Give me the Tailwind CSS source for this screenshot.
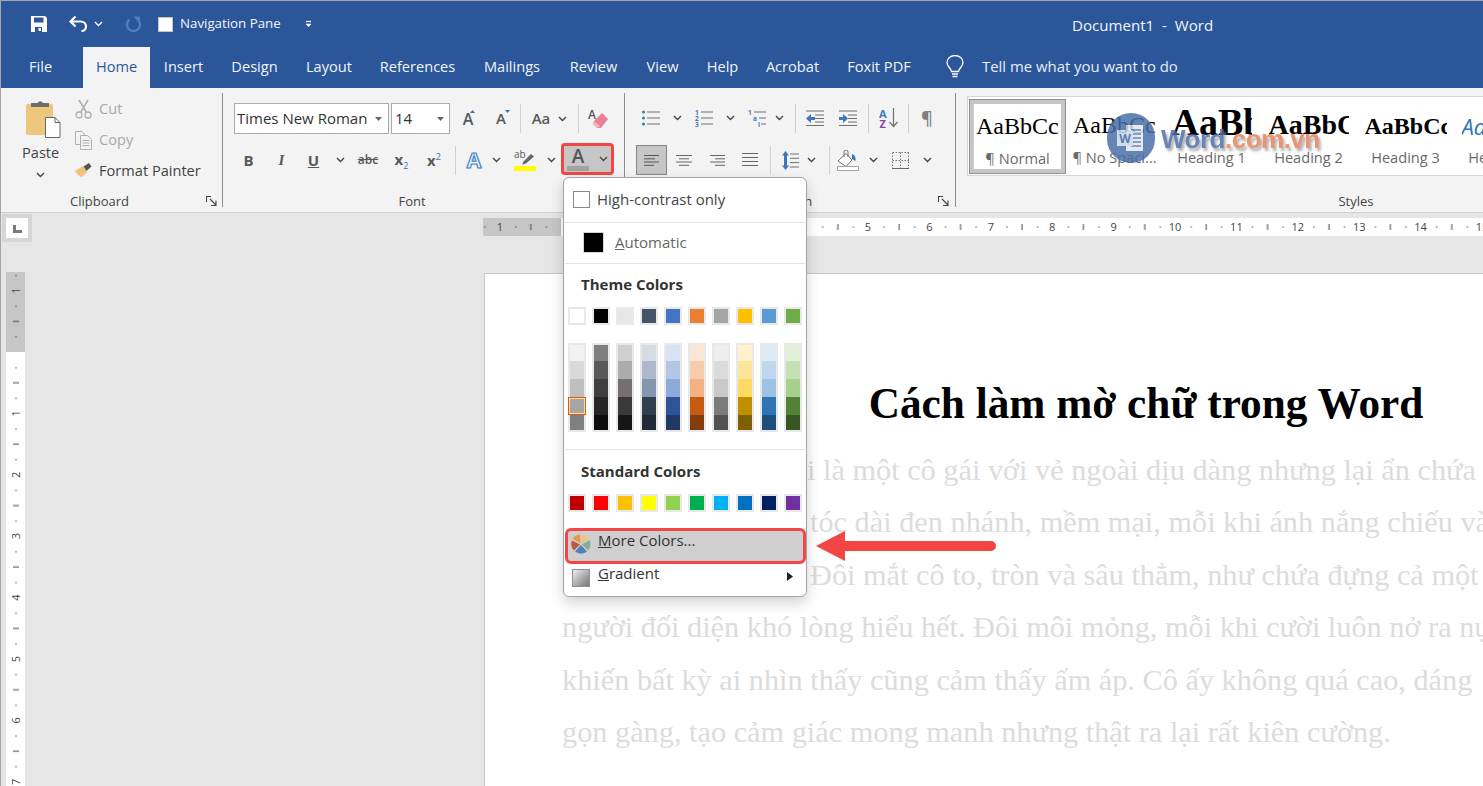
<!DOCTYPE html>
<html><head><meta charset="utf-8"><script src="https://cdn.jsdelivr.net/npm/@tailwindcss/browser@4"></script></head>
<body class="relative w-[1483px] h-[786px] overflow-hidden bg-[#e6e6e6] text-[#444] [font-family:'Open_Sans',sans-serif] text-[14.6px]">

<!-- Title bar -->
<div class="h-[47px] bg-[#2b579a] border-t border-[#a6a6a6] flex items-center text-white relative">
  <div class="w-[31px]"></div>
  <svg class="w-[16px] h-[16px]" viewBox="0 0 16 16"><path fill-rule="evenodd" fill="#fff" d="M0 0H14L16 2V16H0ZM3 1.5V6.5H12.5V1.5ZM4 11V16H11V11ZM7.5 12H10V15H7.5Z"/></svg>
  <div class="w-[22px]"></div>
  <svg class="w-[19px] h-[16px]" viewBox="0 0 19 16"><path d="M2 5.5H11.5C14.5 5.5 17 7.5 17 10.5C17 13 15 15 12.5 15" fill="none" stroke="#fff" stroke-width="2.2"/><path d="M6.5 .5L1.5 5.5L6.5 10.5" fill="none" stroke="#fff" stroke-width="2.2"/></svg>
  <svg class="w-[9px] h-[6px] ml-[6px]" viewBox="0 0 9 6"><path d="M1 1L4.5 4.5L8 1" fill="none" stroke="#fff" stroke-width="1.4"/></svg>
  <svg class="w-[17px] h-[17px] ml-[21px]" viewBox="0 0 17 17"><path d="M5.5 3.5A6.5 6.5 0 1 0 13.5 3.5" fill="none" stroke="#4f7fb8" stroke-width="2.4"/><path d="M9 .5H16V7.5Z" fill="#4f7fb8"/></svg>
  <div class="w-[15px] h-[15px] ml-[17px] bg-white border border-[#c4c4c4]"></div>
  <span class="ml-[7px] text-[13.3px] w-[110px] whitespace-nowrap text-[#f2f5fa]">Navigation Pane</span>
  <svg class="w-[7px] h-[8px] ml-[15px]" viewBox="0 0 7 8"><path d="M1 1.5H6" stroke="#fff" stroke-width="1.2"/><path d="M.5 3.8H6.500L3.5 7Z" fill="#fff"/></svg>
  <span class="absolute left-[1072px] top-[14px] leading-[20px] text-[15.1px] whitespace-pre text-[#f2f5fa]">Document1  -  Word</span>
</div>

<!-- Tabs -->
<div class="h-[41px] bg-[#2b579a] flex text-[#f0f3f8] text-[14.6px] leading-[39px]">
  <div class="w-[83px] pl-[29px]">File</div>
  <div class="w-[67px] text-center bg-[#f3f3f3] text-[#2b579a]">Home</div>
  <div class="w-[67px] text-center">Insert</div>
  <div class="w-[75px] text-center">Design</div>
  <div class="w-[74px] text-center">Layout</div>
  <div class="w-[103px] text-center">References</div>
  <div class="w-[86px] text-center">Mailings</div>
  <div class="w-[77px] text-center">Review</div>
  <div class="w-[61px] text-center">View</div>
  <div class="w-[59px] text-center">Help</div>
  <div class="w-[81px] text-center">Acrobat</div>
  <div class="w-[92px] text-center">Foxit PDF</div>
  <div class="w-[21px]"></div>
  <svg class="w-[18px] h-[24px] mt-[8px]" viewBox="0 0 18 24"><path d="M5.5 16.5C5 13 1 11.5 1 7.5A8 7 0 0 1 17 7.5C17 11.5 13 13 12.5 16.5Z" fill="none" stroke="#fff" stroke-width="1.3"/><path d="M6 19H12M6.5 21.5H11.5" stroke="#fff" stroke-width="1.6"/></svg>
  <div class="ml-[18px] whitespace-nowrap w-[200px] text-[14.9px] text-[#e8edf5]">Tell me what you want to do</div>
</div>

<!-- Ribbon -->
<div class="h-[125px] bg-[#f3f3f3] border-b border-[#cfcfcf] flex overflow-hidden">

  <!-- Clipboard -->
  <div class="relative w-[223px] shrink-0 h-[114px] mt-[5px] border-r border-[#8f8f8f] flex flex-col">
    <div class="flex h-[98px]">
      <div class="w-[75px] pl-[23px] pt-[6px] flex flex-col">
        <svg class="w-[38px] h-[39px] ml-[3px]" viewBox="0 0 38 39"><rect x="0" y="5" width="27" height="31" rx="1.5" fill="#eec77e"/><path d="M5 8V4H11.5A3 3 0 0 1 17 4H23V8Z" fill="#6d6d6d"/><path d="M19.5 18.5H29L34 23.5V38.5H19.5Z" fill="#fff" stroke="#666"/><path d="M29 18.5V23.5H34" fill="none" stroke="#666"/></svg>
        <div class="mt-[4px] -ml-[1px] w-[36px] text-center leading-[20px] whitespace-nowrap">Paste</div>
        <svg class="w-[9px] h-[6px] ml-[13px] mt-[10px]" viewBox="0 0 9 6"><path d="M1 1L4.5 4.5L8 1" fill="none" stroke="#444" stroke-width="1.4"/></svg>
      </div>
      <div class="flex flex-col">
        <div class="flex items-center h-[31px] text-[#a9a9a9]">
          <svg class="w-[17px] h-[20px] mr-[7px]" viewBox="0 0 17 20"><circle cx="4" cy="16" r="3" fill="none" stroke="#b0b0b0" stroke-width="1.3"/><circle cx="13" cy="16" r="3" fill="none" stroke="#b0b0b0" stroke-width="1.3"/><path d="M5.5 13.5L13 1M11.5 13.5L4 1" stroke="#b0b0b0" stroke-width="1.6"/></svg>Cut
        </div>
        <div class="flex items-center h-[32px] text-[#a9a9a9]">
          <svg class="w-[17px] h-[19px] mr-[7px]" viewBox="0 0 17 19"><path d="M.5 .5H7L9.5 3V4M.5 .5V13.5H5" fill="none" stroke="#b0b0b0"/><path d="M5.5 4.5H12.5L16.5 8.5V18.5H5.5Z" fill="#f3f3f3" stroke="#b0b0b0"/><path d="M7.5 9.5H14.5M7.5 12H14.5M7.5 14.5H14.5" stroke="#b0b0b0"/></svg>Copy
        </div>
        <div class="flex items-center h-[29px] whitespace-nowrap">
          <svg class="w-[17px] h-[15px] mr-[7px]" viewBox="0 0 17 15"><path d="M0 8L8 3L12 9L7 14C5 14 2 11 0 8Z" fill="#efc27c"/><path d="M8.5 3.5L14 0L16.5 3.5L11.5 8Z" fill="#555"/></svg>Format Painter
        </div>
      </div>
    </div>
    <div class="mt-auto -mb-[2px] h-[16px] leading-[16px] text-[13px] text-center pr-[23px]">Clipboard</div>
    <svg class="absolute left-[206px] top-[103px] w-[11px] h-[10px]" viewBox="0 0 11 10"><path d="M.5 0V6M.5 .5H5M4 3L10 9M10 4.5V9.5H5" fill="none" stroke="#444" stroke-width="1.1"/></svg>
  </div>

  <!-- Font -->
  <div class="w-[402px] shrink-0 h-[114px] mt-[5px] border-r border-[#8f8f8f] flex flex-col">
    <div class="flex items-center h-[31px] mt-[10px] pl-[11px] text-[#595959]">
      <div class="w-[155px] h-[31px] bg-white border border-[#ababab] flex items-center pl-[2px] text-[#333] text-[15px] whitespace-nowrap">Times New Roman<svg class="w-[7px] h-[4px] ml-auto mr-[6px]" viewBox="0 0 7 4"><path d="M0 0H7L3.5 4Z" fill="#666"/></svg></div>
      <div class="w-[59px] h-[31px] ml-[2px] bg-white border border-[#ababab] flex items-center pl-[3px] text-[#333] text-[15px]">14<svg class="w-[7px] h-[4px] ml-auto mr-[5px]" viewBox="0 0 7 4"><path d="M0 0H7L3.5 4Z" fill="#666"/></svg></div>
      <div class="w-[36px] flex justify-center relative font-semibold text-[16px]">A<svg class="absolute left-[20px] top-[3px] w-[5px] h-[3px]" viewBox="0 0 5 3"><path d="M0 3L2.5 0L5 3Z" fill="#2e75b5"/></svg></div>
      <div class="w-[30px] flex justify-center relative font-semibold text-[15px]">A<svg class="absolute left-[19px] top-[3px] w-[5px] h-[3px]" viewBox="0 0 5 3"><path d="M0 0L2.5 3L5 0Z" fill="#2e75b5"/></svg></div>
      <div class="w-px h-[29px] ml-[4px] bg-[#d0d0d0]"></div>
      <div class="w-[32px] ml-[4px] text-center font-semibold text-[15px]">Aa</div>
      <div class="w-[10px] flex justify-center"><svg class="w-[9px] h-[6px]" viewBox="0 0 9 6"><path d="M1 1L4.5 4.5L8 1" fill="none" stroke="#444" stroke-width="1.4"/></svg></div>
      <div class="w-px h-[29px] ml-[11px] bg-[#d0d0d0]"></div>
      <div class="w-[38px] flex justify-center relative"><svg class="w-[20px] h-[21px]" viewBox="0 0 20 21"><path d="M6 13L14 5L20 11L13 20H9L5 16Z" fill="#e98295"/><path d="M5 16L6.500 13.500L12 18L9 20Z" fill="#f3b6c2"/></svg><span class="absolute left-[9px] -top-[2px] text-[12px] font-semibold">A</span></div>
    </div>
    <div class="flex items-center h-[30px] mt-[11px] pl-[9px] text-[#595959]">
      <div class="w-[33px] text-center font-bold text-[15px]">B</div>
      <div class="w-[33px] text-center italic font-bold text-[15px] [font-family:'Liberation_Serif',serif]">I</div>
      <div class="w-[31px] text-center font-bold text-[15px] underline">U</div>
      <div class="w-[22px] flex justify-center"><svg class="w-[9px] h-[6px]" viewBox="0 0 9 6"><path d="M1 1L4.5 4.5L8 1" fill="none" stroke="#444" stroke-width="1.4"/></svg></div>
      <div class="w-[34px] text-center text-[12px] font-semibold line-through">abc</div>
      <div class="w-[33px] text-center font-bold text-[15px]">x<span class="text-[9px] font-normal text-[#2e75b5] align-sub">2</span></div>
      <div class="w-[32px] text-center font-bold text-[15px]">x<span class="text-[9px] font-normal text-[#2e75b5] align-super">2</span></div>
      <div class="w-px h-[29px] ml-[5px] bg-[#d0d0d0]"></div>
      <div class="w-[36px] text-center font-bold text-[21px] leading-[24px] text-[#f4f8fd] [-webkit-text-stroke:1.2px_#3f83c9] [text-shadow:0_0_2px_#bcd7f0]">A</div>
      <div class="w-[8px] flex justify-center"><svg class="w-[9px] h-[6px] shrink-0" viewBox="0 0 9 6"><path d="M1 1L4.5 4.5L8 1" fill="none" stroke="#444" stroke-width="1.4"/></svg></div>
      <div class="w-[36px] ml-[7px] flex justify-center"><svg class="w-[22px] h-[22px]" viewBox="0 0 22 22"><text x="0" y="9" font-size="10" font-family="Open Sans" fill="#595959">ab</text><path d="M9 13L17 5L20 7.500L12 14.500L8.500 15.500Z" fill="#666"/><rect x="0" y="17" width="22" height="5" fill="#ffff00"/></svg></div>
      <div class="w-[16px] flex justify-center"><svg class="w-[9px] h-[6px]" viewBox="0 0 9 6"><path d="M1 1L4.5 4.5L8 1" fill="none" stroke="#444" stroke-width="1.4"/></svg></div>
      <div class="w-[53px] h-[32px] -mt-[2px] ml-[2px] bg-[#c6c6c6] border-[3px] border-[#f44545] rounded-[4px] flex items-center pl-[3px]">
        <div class="w-[22px] flex flex-col items-center"><span class="font-semibold text-[19px] leading-[19px] text-[#555]">A</span><div class="w-[22px] h-[5px] bg-[#a2a2a2]"></div></div>
        <svg class="w-[9px] h-[6px] ml-[10px]" viewBox="0 0 9 6"><path d="M1 1L4.500 4.500L8 1" fill="none" stroke="#444" stroke-width="1.4"/></svg>
      </div>
    </div>
    <div class="mt-auto -mb-[2px] h-[16px] leading-[16px] text-[13px] text-center pr-[23px]">Font</div>
  </div>

  <!-- Paragraph -->
  <div class="relative w-[331px] shrink-0 h-[114px] mt-[5px] border-r border-[#8f8f8f] flex flex-col">
    <div class="flex items-center h-[30px] mt-[10px] pl-[13px]">
      <div class="w-[26px] flex justify-center"><svg class="w-[18px] h-[16px]" viewBox="0 0 18 16"><path d="M5 2H18M5 8H18M5 14H18" stroke="#707070" stroke-width="1.1"/><circle cx="1.500" cy="2" r="1.500" fill="#3f78b8"/><circle cx="1.500" cy="8" r="1.500" fill="#3f78b8"/><circle cx="1.500" cy="14" r="1.500" fill="#3f78b8"/></svg></div>
      <div class="w-[26px] flex justify-center"><svg class="w-[9px] h-[6px]" viewBox="0 0 9 6"><path d="M1 1L4.500 4.500L8 1" fill="none" stroke="#444" stroke-width="1.4"/></svg></div>
      <div class="w-[27px] flex justify-center"><svg class="w-[18px] h-[18px]" viewBox="0 0 18 18"><path d="M6 3H18M6 9H18M6 15H18" stroke="#707070" stroke-width="1.1"/><text x="0" y="6" font-size="6.500" font-weight="700" fill="#3f78b8" font-family="Open Sans">1</text><text x="0" y="12" font-size="6.500" font-weight="700" fill="#3f78b8" font-family="Open Sans">2</text><text x="0" y="18" font-size="6.500" font-weight="700" fill="#3f78b8" font-family="Open Sans">3</text></svg></div>
      <div class="w-[26px] flex justify-center"><svg class="w-[9px] h-[6px]" viewBox="0 0 9 6"><path d="M1 1L4.500 4.500L8 1" fill="none" stroke="#444" stroke-width="1.4"/></svg></div>
      <div class="w-[27px] flex justify-center"><svg class="w-[18px] h-[18px]" viewBox="0 0 18 18"><path d="M6 3H18M11 9H18M13 15H18" stroke="#707070" stroke-width="1.1"/><text x="0" y="6" font-size="6.500" font-weight="700" fill="#3f78b8" font-family="Open Sans">1</text><text x="5" y="12" font-size="6.500" font-weight="700" fill="#3f78b8" font-family="Open Sans">a</text><text x="10" y="18" font-size="6.500" font-weight="700" fill="#3f78b8" font-family="Open Sans">i</text></svg></div>
      <div class="w-[18px] flex justify-center"><svg class="w-[9px] h-[6px]" viewBox="0 0 9 6"><path d="M1 1L4.500 4.500L8 1" fill="none" stroke="#444" stroke-width="1.4"/></svg></div>
      <div class="w-px h-[29px] ml-[7px] bg-[#d0d0d0]"></div>
      <div class="w-[38px] flex justify-center"><svg class="w-[18px] h-[16px]" viewBox="0 0 18 16"><path d="M0 1H18M9 5H18M9 8.500H18M9 12H18M0 15.500H18" stroke="#707070" stroke-width="1.100"/><path d="M0 8.500L5 4V7H9V10H5V13Z" fill="#3f78b8"/></svg></div>
      <div class="w-[28px] flex justify-center"><svg class="w-[18px] h-[16px]" viewBox="0 0 18 16"><path d="M0 1H18M9 5H18M9 8.500H18M9 12H18M0 15.500H18" stroke="#707070" stroke-width="1.100"/><path d="M9 8.500L4 4V7H0V10H4V13Z" fill="#3f78b8"/></svg></div>
      <div class="w-px h-[29px] ml-[6px] bg-[#d0d0d0]"></div>
      <div class="w-[39px] flex justify-center"><svg class="w-[20px] h-[20px]" viewBox="0 0 20 20"><text x="0" y="9.500" font-size="11" font-weight="700" fill="#3f78b8" font-family="Open Sans">A</text><text x="0.500" y="20" font-size="11" font-weight="700" fill="#8445a8" font-family="Open Sans">Z</text><path d="M14.500 0V18M10.500 14L14.500 18.500L18.500 14" fill="none" stroke="#707070" stroke-width="1.200"/></svg></div>
      <div class="w-px h-[29px] bg-[#d0d0d0]"></div>
      <div class="w-[36px] text-center text-[18px] font-semibold leading-[20px] text-[#7f7f7f]">¶</div>
    </div>
    <div class="flex items-center h-[30px] mt-[12px] pl-[11px]">
      <div class="w-[31px] h-[30px] bg-[#c6c6c6] border border-[#858585] flex justify-center items-center"><svg class="w-[15px] h-[11px]" viewBox="0 0 15 11"><path d="M0 .500H15M0 3.800H11M0 7H15M0 10.300H10" stroke="#555"/></svg></div>
      <div class="w-[34px] flex justify-center"><svg class="w-[16px] h-[11px]" viewBox="0 0 16 11"><path d="M0 .500H16M3 3.800H13M0 7H16M3 10.300H13" stroke="#666"/></svg></div>
      <div class="w-[32px] flex justify-center"><svg class="w-[15px] h-[11px]" viewBox="0 0 15 11"><path d="M0 .500H15M5 3.800H15M0 7H15M5 10.300H15" stroke="#666"/></svg></div>
      <div class="w-[34px] flex justify-center"><svg class="w-[16px] h-[14px]" viewBox="0 0 16 14"><path d="M0 .500H16M0 4.500H16M0 8.500H16M0 12.500H16" stroke="#666"/></svg></div>
      <div class="w-px h-[29px] ml-[3px] bg-[#d0d0d0]"></div>
      <div class="w-[28px] ml-[5px] flex justify-center"><svg class="w-[17px] h-[19px]" viewBox="0 0 17 19"><path d="M3.500 0L7 4.500H5V14.500H7L3.500 19L0 14.500H2V4.500H0Z" fill="#3f78b8"/><path d="M8 3H17M8 7.300H17M8 11.600H17M8 16H17" stroke="#707070"/></svg></div>
      <div class="w-[14px] flex justify-center"><svg class="w-[9px] h-[6px]" viewBox="0 0 9 6"><path d="M1 1L4.500 4.500L8 1" fill="none" stroke="#444" stroke-width="1.400"/></svg></div>
      <div class="w-px h-[29px] ml-[11px] bg-[#d0d0d0]"></div>
      <div class="w-[36px] flex justify-center"><svg class="w-[22px] h-[21px]" viewBox="0 0 22 21"><path d="M1 11L9 3.500L15 10L9 16.500Z" fill="#fff" stroke="#777"/><path d="M7 7V2A2 2 0 0 1 11 2V7" fill="none" stroke="#777"/><path d="M15 4C18 5 19 8 18.500 11L15 9Z" fill="#3f78b8"/><rect x=".5" y="16.500" width="21" height="4" fill="#fff" stroke="#a8a8a8"/></svg></div>
      <div class="w-[14px] flex justify-center"><svg class="w-[9px] h-[6px]" viewBox="0 0 9 6"><path d="M1 1L4.500 4.500L8 1" fill="none" stroke="#444" stroke-width="1.400"/></svg></div>
      <div class="w-[40px] flex justify-center"><svg class="w-[17px] h-[17px]" viewBox="0 0 17 17"><path d="M.5 .5H17M.5 8.500H17M.5 .5V16M8.500 .5V16M16.500 .5V16" fill="none" stroke="#777" stroke-dasharray="1.500 1.500"/><path d="M0 16.500H17" stroke="#666"/></svg></div>
      <div class="w-[14px] flex justify-center"><svg class="w-[9px] h-[6px]" viewBox="0 0 9 6"><path d="M1 1L4.500 4.500L8 1" fill="none" stroke="#444" stroke-width="1.400"/></svg></div>
    </div>
    <svg class="absolute left-[313px] top-[103px] w-[11px] h-[10px]" viewBox="0 0 11 10"><path d="M.5 0V6M.5 .5H5M4 3L10 9M10 4.500V9.500H5" fill="none" stroke="#444" stroke-width="1.100"/></svg>
    <div class="absolute left-[124px] top-[100px] h-[16px] leading-[16px] text-[13px]">Paragraph</div>
  </div>

  <!-- Styles -->
  <div class="w-[527px] shrink-0 h-[114px] mt-[5px] flex flex-col relative">
    <div class="w-[600px] h-[80px] ml-[11px] mt-[3px] bg-white border border-[#d6d6d6] flex items-center pl-[1px] overflow-hidden text-[#6a6a6a]">
      <div class="w-[97px] h-[75px] shrink-0 border border-[#8f8f8f] bg-white flex flex-col items-center [box-shadow:inset_0_0_0_4px_#c6c6c6]">
        <div class="mt-[8px] w-[83px] overflow-hidden whitespace-nowrap text-[#000] text-[24px] leading-[36px] [font-family:'Liberation_Serif',serif]">AaBbCcDd</div>
        <div class="text-[14.6px] leading-[20px] mt-[4px]">¶ Normal</div>
      </div>
      <div class="w-[97px] h-[75px] shrink-0 flex flex-col items-center">
        <div class="mt-[8px] w-[83px] overflow-hidden whitespace-nowrap text-[#000] text-[24px] leading-[36px] [font-family:'Liberation_Serif',serif]">AaBbCcDd</div>
        <div class="text-[14.6px] leading-[20px] mt-[4px] whitespace-nowrap">¶ No Spaci...</div>
      </div>
      <div class="w-[97px] h-[75px] shrink-0 flex flex-col items-center">
        <div class="mt-[2px] w-[80px] h-[42px] overflow-hidden whitespace-nowrap text-[#000] text-[38px] leading-[42px] font-bold [font-family:'Liberation_Serif',serif]">AaBbCc</div>
        <div class="text-[14.6px] leading-[20px] mt-[4px]">Heading 1</div>
      </div>
      <div class="w-[97px] h-[75px] shrink-0 flex flex-col items-center">
        <div class="mt-[8px] w-[80px] h-[36px] overflow-hidden whitespace-nowrap text-[#000] text-[28px] leading-[36px] font-bold [font-family:'Liberation_Serif',serif]">AaBbCc</div>
        <div class="text-[14.6px] leading-[20px] mt-[4px]">Heading 2</div>
      </div>
      <div class="w-[97px] h-[75px] shrink-0 flex flex-col items-center">
        <div class="mt-[8px] w-[82px] h-[36px] overflow-hidden whitespace-nowrap text-[#000] text-[24px] leading-[38px] font-bold [font-family:'Liberation_Serif',serif]">AaBbCcDd</div>
        <div class="text-[14.6px] leading-[20px] mt-[4px]">Heading 3</div>
      </div>
      <div class="w-[97px] h-[75px] shrink-0 flex flex-col items-center">
        <div class="mt-[8px] w-[82px] h-[36px] overflow-hidden whitespace-nowrap text-[#2e75b5] text-[22px] leading-[38px] italic">AaBbCcDd</div>
        <div class="text-[14.6px] leading-[20px] mt-[4px]">Heading 4</div>
      </div>
    </div>
    <div class="mt-auto -mb-[2px] h-[16px] leading-[16px] text-[13px] text-center w-[800px]">Styles</div>
  </div>
</div>

<!-- Document area -->
<div class="flex h-[573px]">
  <div class="w-[483px] shrink-0 flex flex-col">
    <div class="w-[30px] h-[28px] ml-[2px] mt-[1px] bg-[#d6d6d6] flex items-center justify-center">
      <div class="w-[22px] h-[20px] bg-white flex items-center justify-center"><svg class="w-[9px] h-[8px] mt-[2px]" viewBox="0 0 9 8"><path d="M0 0H3V5H9V8H0Z" fill="#7a7a7a"/></svg></div>
    </div>
    <svg class="w-[19px] h-[514px] ml-[6px] mt-[30px]" viewBox="0 0 19 514">
      <defs><pattern id="vt" patternUnits="userSpaceOnUse" width="19" height="61.4" y="80"><rect x="9.500" y="15" width="1" height="1.400" fill="#444"/><rect x="7" y="30.300" width="6" height="1" fill="#444"/><rect x="9.500" y="45.600" width="1" height="1.400" fill="#444"/></pattern></defs>
      <rect width="19" height="80" fill="#c6c6c6"/><rect y="80" width="19" height="434" fill="#fff"/>
      <rect width="19" height="514" fill="url(#vt)"/>
      <g font-family="Open Sans" font-size="11" fill="#444" text-anchor="middle">
        <text transform="translate(14,18.600) rotate(-90)">1</text><text transform="translate(14,141.400) rotate(-90)">1</text><text transform="translate(14,202.800) rotate(-90)">2</text><text transform="translate(14,264.200) rotate(-90)">3</text><text transform="translate(14,325.600) rotate(-90)">4</text><text transform="translate(14,387) rotate(-90)">5</text><text transform="translate(14,448.400) rotate(-90)">6</text><text transform="translate(14,509.800) rotate(-90)">7</text>
      </g>
    </svg>
  </div>
  <div class="flex-1 min-w-0 flex flex-col overflow-hidden">
    <svg class="w-[1000px] h-[18px] mt-[5px] shrink-0" viewBox="0 0 1000 18">
      <defs><pattern id="ht" patternUnits="userSpaceOnUse" width="61.4" height="18" x="17"><rect x="15" y="8.500" width="1.400" height="1" fill="#444"/><rect x="30.300" y="6" width="1" height="6" fill="#444"/><rect x="45.600" y="8.500" width="1.400" height="1" fill="#444"/></pattern></defs>
      <rect width="78" height="18" fill="#c6c6c6"/><rect x="78" width="922" height="18" fill="#fff"/>
      <rect width="1000" height="18" fill="url(#ht)"/>
      <g font-family="Open Sans" font-size="11" fill="#444" text-anchor="middle">
        <text x="17" y="13">1</text><text x="385" y="13">5</text><text x="446.400" y="13">6</text><text x="507.800" y="13">7</text><text x="569.200" y="13">8</text><text x="630.600" y="13">9</text><text x="692" y="13">10</text><text x="753.400" y="13">11</text><text x="814.800" y="13">12</text><text x="876.200" y="13">13</text><text x="937.600" y="13">14</text><text x="999" y="13">15</text>
      </g>
    </svg>
    <div class="mt-[37px] ml-[1px] flex-1 bg-white border-t border-l border-[#c8c8c8] pl-[77px] pt-[104px] [font-family:'Liberation_Serif',serif] overflow-hidden">
      <div class="w-[1168px] text-center font-bold text-[43.3px] leading-[50px] text-black whitespace-nowrap">Cách làm mờ chữ trong Word</div>
      <div class="mt-[16px] w-[1200px] text-[30.3px] leading-[52.4px] text-[#dcdcdc] whitespace-nowrap">
        <div class="pl-[245px]">i là một cô gái với vẻ ngoài dịu dàng nhưng lại ẩn chứa</div>
        <div class="pl-[248px]">tóc dài đen nhánh, mềm mại, mỗi khi ánh nắng chiếu và</div>
        <div class="pl-[248px]">Đôi mắt cô to, tròn và sâu thẳm, như chứa đựng cả một</div>
        <div>người đối diện khó lòng hiểu hết. Đôi môi mỏng, mỗi khi cười luôn nở ra nụ</div>
        <div>khiến bất kỳ ai nhìn thấy cũng cảm thấy ấm áp. Cô ấy không quá cao, dáng</div>
        <div>gọn gàng, tạo cảm giác mong manh nhưng thật ra lại rất kiên cường.</div>
      </div>
    </div>
  </div>
</div>

<!-- Left window edge -->
<div class="absolute left-0 top-0 w-px h-full bg-[#a6a6a6]"></div>

<!-- Watermark -->
<div class="absolute left-[1107px] top-[113px] flex items-center opacity-85">
  <div class="w-[48px] h-[50px] rounded-full bg-[#4a6fa8] flex items-center justify-center">
    <svg class="w-[30px] h-[28px]" viewBox="0 0 30 28"><path d="M10 1H27V27H10Z" fill="#dfe6f1"/><path d="M15 6H25M15 10H25M15 14H25M15 18H25M15 22H25" stroke="#4a6fa8" stroke-width="1.500"/><rect x="1" y="6" width="16" height="16" fill="#c9d6ea"/><text x="9" y="19" text-anchor="middle" font-size="12" font-weight="700" font-family="Open Sans" fill="#3d64a0">W</text></svg>
  </div>
  <div class="ml-[6px] mt-[2px] text-[26px] leading-[30px] tracking-[-0.5px] font-bold [font-family:'Liberation_Sans',sans-serif] whitespace-nowrap [text-shadow:2px_3px_3px_#9a9a9a]"><span class="text-[#4f70a8]">Word</span><span class="text-[#e98158]">.com.vn</span></div>
</div>

<!-- Font colour popup -->
<div class="absolute left-[563px] top-[177px] w-[244px] h-[420px] bg-white border border-[#a3a3a3] rounded-[6px] shadow-[0_6px_14px_rgba(0,0,0,0.18)] text-[15px]">
  <div class="h-[44px] flex items-center pl-[9px] pb-[2px] text-[#444]">
    <div class="w-[17px] h-[17px] border border-[#8a8a8a] mr-[7px]"></div>High-contrast only
  </div>
  <div class="mx-[1px] h-px bg-[#e2e2e2]"></div>
  <div class="h-[40px] flex items-center pl-[19px] pb-[1px] text-[#666]">
    <div class="w-[21px] h-[21px] bg-black border border-[#d8d8d8] mr-[11px]"></div><span><span class="underline">A</span>utomatic</span>
  </div>
  <div class="mx-[1px] h-px bg-[#e2e2e2]"></div>
  <div class="h-[43px] pl-[17px] pb-[2px] flex items-center font-bold text-[#333]">Theme Colors</div>
  <div class="flex gap-[6px] pl-[4px]">
    <div class="w-[18px] h-[18px] border-2 border-[#e8e8e8] bg-[#ffffff]"></div>
    <div class="w-[18px] h-[18px] border-2 border-[#e8e8e8] bg-[#000000]"></div>
    <div class="w-[18px] h-[18px] border-2 border-[#e8e8e8] bg-[#e7e6e6]"></div>
    <div class="w-[18px] h-[18px] border-2 border-[#e8e8e8] bg-[#44546a]"></div>
    <div class="w-[18px] h-[18px] border-2 border-[#e8e8e8] bg-[#4472c4]"></div>
    <div class="w-[18px] h-[18px] border-2 border-[#e8e8e8] bg-[#ed7d31]"></div>
    <div class="w-[18px] h-[18px] border-2 border-[#e8e8e8] bg-[#a5a5a5]"></div>
    <div class="w-[18px] h-[18px] border-2 border-[#e8e8e8] bg-[#ffc000]"></div>
    <div class="w-[18px] h-[18px] border-2 border-[#e8e8e8] bg-[#5b9bd5]"></div>
    <div class="w-[18px] h-[18px] border-2 border-[#e8e8e8] bg-[#70ad47]"></div>
  </div>
  <div class="flex gap-[6px] pl-[4px] mt-[18px]">
    <div class="w-[18px] border-2 border-[#e8e8e8] flex flex-col relative"><div class="h-[16px] bg-[#f2f2f2]"></div><div class="h-[18px] bg-[#d9d9d9]"></div><div class="h-[18px] bg-[#bfbfbf]"></div><div class="h-[18px] bg-[#a6a6a6]"></div><div class="h-[15px] bg-[#808080]"></div>
      <div class="absolute -left-[2px] top-[52px] w-[18px] h-[18px] bg-[#a6a6a6] border border-[#e2590e] [box-shadow:inset_0_0_0_1px_#ffe294]"></div></div>
    <div class="w-[18px] border-2 border-[#e8e8e8] flex flex-col"><div class="h-[16px] bg-[#7f7f7f]"></div><div class="h-[18px] bg-[#595959]"></div><div class="h-[18px] bg-[#3f3f3f]"></div><div class="h-[18px] bg-[#262626]"></div><div class="h-[15px] bg-[#0d0d0d]"></div></div>
    <div class="w-[18px] border-2 border-[#e8e8e8] flex flex-col"><div class="h-[16px] bg-[#d0cece]"></div><div class="h-[18px] bg-[#aeabab]"></div><div class="h-[18px] bg-[#757070]"></div><div class="h-[18px] bg-[#3a3838]"></div><div class="h-[15px] bg-[#171616]"></div></div>
    <div class="w-[18px] border-2 border-[#e8e8e8] flex flex-col"><div class="h-[16px] bg-[#d6dce4]"></div><div class="h-[18px] bg-[#adb9ca]"></div><div class="h-[18px] bg-[#8496b0]"></div><div class="h-[18px] bg-[#323f4f]"></div><div class="h-[15px] bg-[#222a35]"></div></div>
    <div class="w-[18px] border-2 border-[#e8e8e8] flex flex-col"><div class="h-[16px] bg-[#d9e2f3]"></div><div class="h-[18px] bg-[#b4c6e7]"></div><div class="h-[18px] bg-[#8eaadb]"></div><div class="h-[18px] bg-[#2f5496]"></div><div class="h-[15px] bg-[#1f3864]"></div></div>
    <div class="w-[18px] border-2 border-[#e8e8e8] flex flex-col"><div class="h-[16px] bg-[#fbe5d5]"></div><div class="h-[18px] bg-[#f7cbac]"></div><div class="h-[18px] bg-[#f4b183]"></div><div class="h-[18px] bg-[#c55a11]"></div><div class="h-[15px] bg-[#833c0b]"></div></div>
    <div class="w-[18px] border-2 border-[#e8e8e8] flex flex-col"><div class="h-[16px] bg-[#ededed]"></div><div class="h-[18px] bg-[#dbdbdb]"></div><div class="h-[18px] bg-[#c9c9c9]"></div><div class="h-[18px] bg-[#7b7b7b]"></div><div class="h-[15px] bg-[#525252]"></div></div>
    <div class="w-[18px] border-2 border-[#e8e8e8] flex flex-col"><div class="h-[16px] bg-[#fff2cc]"></div><div class="h-[18px] bg-[#fee599]"></div><div class="h-[18px] bg-[#ffd965]"></div><div class="h-[18px] bg-[#bf8f00]"></div><div class="h-[15px] bg-[#7f6000]"></div></div>
    <div class="w-[18px] border-2 border-[#e8e8e8] flex flex-col"><div class="h-[16px] bg-[#deeaf6]"></div><div class="h-[18px] bg-[#bdd7ee]"></div><div class="h-[18px] bg-[#9cc3e5]"></div><div class="h-[18px] bg-[#2e75b5]"></div><div class="h-[15px] bg-[#1e4e79]"></div></div>
    <div class="w-[18px] border-2 border-[#e8e8e8] flex flex-col"><div class="h-[16px] bg-[#e2efd9]"></div><div class="h-[18px] bg-[#c5e0b3]"></div><div class="h-[18px] bg-[#a8d08d]"></div><div class="h-[18px] bg-[#538135]"></div><div class="h-[15px] bg-[#375623]"></div></div>
  </div>
  <div class="mx-[1px] h-px bg-[#e2e2e2] mt-[17px]"></div>
  <div class="h-[44px] pl-[17px] pb-[2px] flex items-center font-bold text-[#333]">Standard Colors</div>
  <div class="flex gap-[6px] pl-[4px]">
    <div class="w-[18px] h-[18px] border-2 border-[#e8e8e8] bg-[#c00000]"></div>
    <div class="w-[18px] h-[18px] border-2 border-[#e8e8e8] bg-[#ff0000]"></div>
    <div class="w-[18px] h-[18px] border-2 border-[#e8e8e8] bg-[#ffc000]"></div>
    <div class="w-[18px] h-[18px] border-2 border-[#e8e8e8] bg-[#ffff00]"></div>
    <div class="w-[18px] h-[18px] border-2 border-[#e8e8e8] bg-[#92d050]"></div>
    <div class="w-[18px] h-[18px] border-2 border-[#e8e8e8] bg-[#00b050]"></div>
    <div class="w-[18px] h-[18px] border-2 border-[#e8e8e8] bg-[#00b0f0]"></div>
    <div class="w-[18px] h-[18px] border-2 border-[#e8e8e8] bg-[#0070c0]"></div>
    <div class="w-[18px] h-[18px] border-2 border-[#e8e8e8] bg-[#002060]"></div>
    <div class="w-[18px] h-[18px] border-2 border-[#e8e8e8] bg-[#7030a0]"></div>
  </div>
  <div class="mt-[16px] ml-[1px] w-[241px] h-[36px] bg-[#cfcfcf] border-[3px] border-[#f44545] rounded-[6px] flex items-start pl-[3px] text-[#333]">
    <svg class="w-[20px] h-[20px] shrink-0 mt-[3px]" viewBox="0 0 20 20"><path d="M9.500 9.500L9 0.500A9.500 9.500 0 0 0 1.500 5Z" fill="#e8984f"/><path d="M10.500 9.500L10.500 0.500A9.500 9.500 0 0 1 18 5Z" fill="#efc680"/><path d="M11 10.500L18.500 6A9.500 9.500 0 0 1 17 16.500Z" fill="#85ad9b"/><path d="M10 11L16 17.500A9.500 9.500 0 0 1 4 17.500Z" fill="#4f81bd"/><path d="M9 10.500L3 16.500A9.500 9.500 0 0 1 1 6.500Z" fill="#bb5c3c"/></svg>
    <span class="ml-[7px] leading-[19px]"><span class="underline">M</span>ore Colors...</span>
  </div>
  <div class="flex pl-[8px] pt-[1px] text-[#333] relative">
    <div class="w-[18px] h-[18px] mt-[4px] border border-[#8f8f8f] bg-linear-to-br from-[#eeeeee] to-[#777777]"></div>
    <span class="ml-[8px] leading-[18px] -mt-[1px]"><span class="underline">G</span>radient</span>
    <svg class="absolute left-[223px] top-[8px] w-[6px] h-[9px]" viewBox="0 0 6 9"><path d="M0 0L6 4.500L0 9Z" fill="#222"/></svg>
  </div>
</div>

<!-- Red annotation arrow -->
<svg class="absolute left-[815px] top-[530px] w-[182px] h-[32px]" viewBox="0 0 182 32"><path d="M1 16L30 1V11H176A5 5 0 0 1 176 21H30V31Z" fill="#f44545"/></svg>

</body></html>
